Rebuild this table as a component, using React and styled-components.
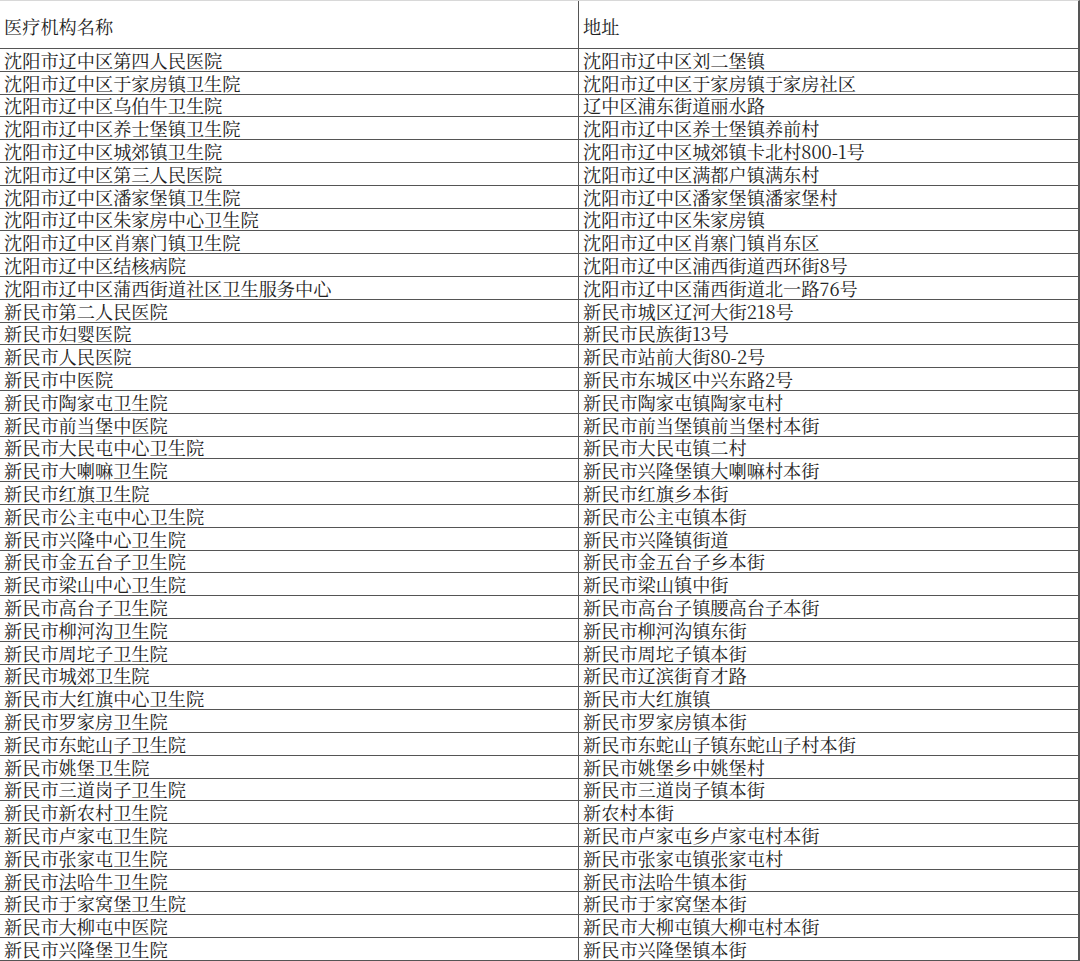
import React from "react";
import styled, { createGlobalStyle } from "styled-components";

const Global = createGlobalStyle`
  html, body { margin: 0; padding: 0; background: #ffffff; }
  body { font-family: "Noto Serif CJK SC", "Noto Sans CJK SC", serif; }
`;

const rows = [
  ["沈阳市辽中区第四人民医院", "沈阳市辽中区刘二堡镇"],
  ["沈阳市辽中区于家房镇卫生院", "沈阳市辽中区于家房镇于家房社区"],
  ["沈阳市辽中区乌伯牛卫生院", "辽中区浦东街道丽水路"],
  ["沈阳市辽中区养士堡镇卫生院", "沈阳市辽中区养士堡镇养前村"],
  ["沈阳市辽中区城郊镇卫生院", "沈阳市辽中区城郊镇卡北村800-1号"],
  ["沈阳市辽中区第三人民医院", "沈阳市辽中区满都户镇满东村"],
  ["沈阳市辽中区潘家堡镇卫生院", "沈阳市辽中区潘家堡镇潘家堡村"],
  ["沈阳市辽中区朱家房中心卫生院", "沈阳市辽中区朱家房镇"],
  ["沈阳市辽中区肖寨门镇卫生院", "沈阳市辽中区肖寨门镇肖东区"],
  ["沈阳市辽中区结核病院", "沈阳市辽中区浦西街道西环街8号"],
  ["沈阳市辽中区蒲西街道社区卫生服务中心", "沈阳市辽中区蒲西街道北一路76号"],
  ["新民市第二人民医院", "新民市城区辽河大街218号"],
  ["新民市妇婴医院", "新民市民族街13号"],
  ["新民市人民医院", "新民市站前大街80-2号"],
  ["新民市中医院", "新民市东城区中兴东路2号"],
  ["新民市陶家屯卫生院", "新民市陶家屯镇陶家屯村"],
  ["新民市前当堡中医院", "新民市前当堡镇前当堡村本街"],
  ["新民市大民屯中心卫生院", "新民市大民屯镇二村"],
  ["新民市大喇嘛卫生院", "新民市兴隆堡镇大喇嘛村本街"],
  ["新民市红旗卫生院", "新民市红旗乡本街"],
  ["新民市公主屯中心卫生院", "新民市公主屯镇本街"],
  ["新民市兴隆中心卫生院", "新民市兴隆镇街道"],
  ["新民市金五台子卫生院", "新民市金五台子乡本街"],
  ["新民市梁山中心卫生院", "新民市梁山镇中街"],
  ["新民市高台子卫生院", "新民市高台子镇腰高台子本街"],
  ["新民市柳河沟卫生院", "新民市柳河沟镇东街"],
  ["新民市周坨子卫生院", "新民市周坨子镇本街"],
  ["新民市城郊卫生院", "新民市辽滨街育才路"],
  ["新民市大红旗中心卫生院", "新民市大红旗镇"],
  ["新民市罗家房卫生院", "新民市罗家房镇本街"],
  ["新民市东蛇山子卫生院", "新民市东蛇山子镇东蛇山子村本街"],
  ["新民市姚堡卫生院", "新民市姚堡乡中姚堡村"],
  ["新民市三道岗子卫生院", "新民市三道岗子镇本街"],
  ["新民市新农村卫生院", "新农村本街"],
  ["新民市卢家屯卫生院", "新民市卢家屯乡卢家屯村本街"],
  ["新民市张家屯卫生院", "新民市张家屯镇张家屯村"],
  ["新民市法哈牛卫生院", "新民市法哈牛镇本街"],
  ["新民市于家窝堡卫生院", "新民市于家窝堡本街"],
  ["新民市大柳屯中医院", "新民市大柳屯镇大柳屯村本街"],
  ["新民市兴隆堡卫生院", "新民市兴隆堡镇本街"],
];

const Sheet = styled.div`
  width: 1080px;
  height: 961px;
  overflow: hidden;
  box-sizing: border-box;
  border-top: 1px solid #d8d8d8;
  border-right: 2px solid #555555;
`;

const Row = styled.div`
  display: grid;
  grid-template-columns: 578px 1fr;
  height: ${(p) => (p.$header ? "48px" : "22.8px")};
  box-sizing: border-box;
  border-bottom: 1px solid #555555;
`;

const Cell = styled.div`
  display: flex;
  align-items: center;
  box-sizing: border-box;
  padding-left: 4px;
  border-left: ${(p) => (p.$first ? "none" : "1px solid #555555")};
  font-size: 18.2px;
  line-height: 20px;
  color: #222222;
  white-space: nowrap;
  padding-top: ${(p) => (p.$header ? "3px" : "0")};
`;

export default function App() {
  return (
    <>
      <Global />
      <Sheet>
        <Row $header>
          <Cell $first $header>医疗机构名称</Cell>
          <Cell $header>地址</Cell>
        </Row>
        {rows.map(([name, addr]) => (
          <Row key={name}>
            <Cell $first>{name}</Cell>
            <Cell>{addr}</Cell>
          </Row>
        ))}
      </Sheet>
    </>
  );
}
